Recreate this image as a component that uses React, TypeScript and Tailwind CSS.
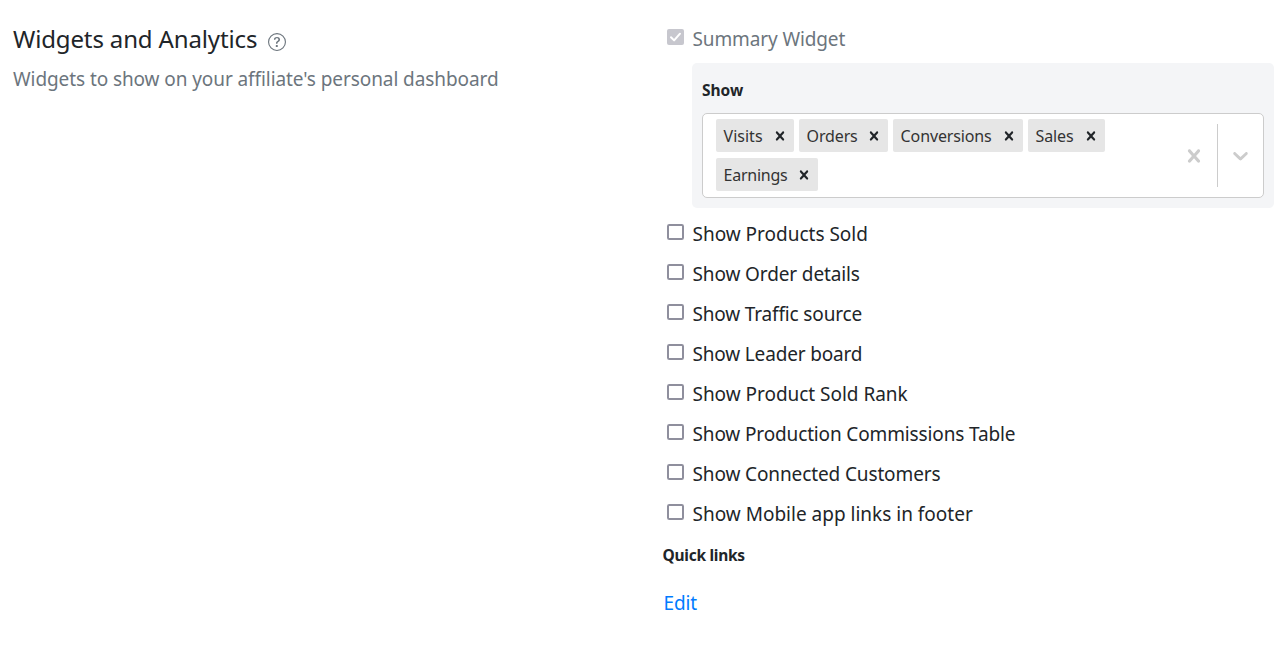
type Item = { label: string; spacing: string };

const options: Item[] = [
  { label: "Show Products Sold", spacing: "tracking-[-0.01px]" },
  { label: "Show Order details", spacing: "tracking-[-0.12px]" },
  { label: "Show Traffic source", spacing: "tracking-[-0.16px]" },
  { label: "Show Leader board", spacing: "tracking-[-0.17px]" },
  { label: "Show Product Sold Rank", spacing: "tracking-[-0.03px]" },
  { label: "Show Production Commissions Table", spacing: "tracking-[-0.14px]" },
  { label: "Show Connected Customers", spacing: "tracking-[-0.12px]" },
  { label: "Show Mobile app links in footer", spacing: "tracking-[0px]" },
];

const tags = [
  { label: "Visits", width: "w-[78px]", spacing: "tracking-[0px]" },
  { label: "Orders", width: "w-[89px]", spacing: "tracking-[-0.15px]" },
  { label: "Conversions", width: "w-[130px]", spacing: "tracking-[-0.13px]" },
  { label: "Sales", width: "w-[77px]", spacing: "tracking-[-0.15px]" },
  { label: "Earnings", width: "w-[102px]", spacing: "tracking-[-0.25px]" },
];

const crossPath =
  "M14.348 14.849c-0.469 0.469-1.229 0.469-1.697 0l-2.651-3.030-2.651 3.029c-0.469 0.469-1.229 0.469-1.697 0-0.469-0.469-0.469-1.229 0-1.697l2.758-3.15-2.759-3.152c-0.469-0.469-0.469-1.228 0-1.697s1.228-0.469 1.697 0l2.652 3.031 2.651-3.031c0.469-0.469 1.228-0.469 1.697 0s0.469 1.229 0 1.697l-2.758 3.152 2.758 3.15c0.469 0.469 0.469 1.229 0 1.698z";
const chevronPath =
  "M4.516 7.548c0.436-0.446 1.043-0.481 1.576 0l3.908 3.747 3.908-3.747c0.533-0.481 1.141-0.446 1.574 0 0.436 0.445 0.408 1.197 0 1.615-0.406 0.418-4.695 4.502-4.695 4.502-0.217 0.223-0.502 0.335-0.787 0.335s-0.57-0.112-0.789-0.335c0 0-4.287-4.084-4.695-4.502s-0.436-1.17 0-1.615z";

function Glyph({ path, className }: { path: string; className: string }) {
  return (
    <svg viewBox="0 0 20 20" fill="currentColor" className={`shrink-0 ${className}`} aria-hidden="true">
      <path d={path} />
    </svg>
  );
}

function Checkbox({ checked = false, className }: { checked?: boolean; className: string }) {
  return (
    <svg viewBox="0 0 17 16" className={`h-4 w-[17px] shrink-0 ${className}`} aria-hidden="true">
      {checked ? (
        <>
          <rect width="17" height="16" rx="2" fill="#c7c7ce" />
          <path d="M4 8.2 7.1 11.4 13 4.7" fill="none" stroke="#fff" strokeWidth="2" strokeLinecap="round" strokeLinejoin="round" />
        </>
      ) : (
        <rect x="1" y="1" width="15" height="14" rx="1.3" fill="#fff" stroke="#8f8f9d" strokeWidth="2" />
      )}
    </svg>
  );
}

function Option({ label, spacing }: Item) {
  return (
    <label className="flex h-10 items-start gap-[8.5px] pl-[5px]">
      <Checkbox className="mt-[10px]" />
      <span className={`whitespace-nowrap leading-10 ${spacing}`}>{label}</span>
    </label>
  );
}

export default function App() {
  return (
    <main className="flex h-[667px] w-[1288px] bg-white font-['Noto_Sans',sans-serif] text-[19px] text-[#212529]">
      <section className="w-[662px] shrink-0 pl-[13px] pt-[19px]">
        <div className="flex h-10 items-center gap-[11px]">
          <h2 className="whitespace-nowrap text-[24px] leading-10 tracking-[-0.14px]">Widgets and Analytics</h2>
          <svg viewBox="0 0 16 16" className="mt-[5px] h-[18px] w-[18px] text-[#6c757d]" fill="currentColor" aria-hidden="true">
            <path d="M8 15A7 7 0 1 1 8 1a7 7 0 0 1 0 14m0 1A8 8 0 1 0 8 0a8 8 0 0 0 0 16" />
            <path d="M5.255 5.786a.237.237 0 0 0 .241.247h.825c.138 0 .248-.113.266-.25.09-.656.54-1.134 1.342-1.134.686 0 1.314.343 1.314 1.168 0 .635-.374.927-.965 1.371-.673.489-1.206 1.06-1.168 1.987l.003.217a.25.25 0 0 0 .25.246h.811a.25.25 0 0 0 .25-.25v-.105c0-.718.273-.927 1.01-1.486.609-.463 1.244-.977 1.244-2.056 0-1.511-1.276-2.241-2.673-2.241-1.267 0-2.655.59-2.75 2.286m1.557 5.763c0 .533.425.927 1.01.927.609 0 1.028-.394 1.028-.927 0-.552-.42-.94-1.029-.94-.584 0-1.009.388-1.009.94" />
          </svg>
        </div>
        <p className="whitespace-nowrap leading-10 tracking-[-0.085px] text-[#6c757d]">
          Widgets to show on your affiliate's personal dashboard
        </p>
      </section>

      <section className="w-[612px] shrink-0 pt-[18px]">
        <div className="flex h-[45px] gap-[8.5px] pl-[5px]">
          <Checkbox checked className="mt-[11px]" />
          <span className="whitespace-nowrap pt-px leading-10 tracking-[-0.12px] text-[#6c757d]">Summary Widget</span>
        </div>
        <div className="ml-[30px] h-[145px] w-[582px] rounded-[5px] bg-[#f4f5f7] px-[10px] pt-[12px]">
          <h3 className="h-[38px] whitespace-nowrap text-[15.5px] font-bold leading-[30px] tracking-[0px]">Show</h3>
          <div className="flex h-[85px] rounded-[5px] border border-[#ccc] bg-white">
            <div className="flex flex-1 flex-wrap content-start gap-x-[5px] gap-y-[6px] pl-[13px] pt-[5px]">
              {tags.map((tag) => (
                <div
                  key={tag.label}
                  className={`flex h-[33px] items-center justify-between rounded-[2px] bg-[#e6e6e6] pl-[7.6px] pr-[5px] ${tag.width}`}
                >
                  <span className={`whitespace-nowrap text-[16px] text-[#333] ${tag.spacing}`}>{tag.label}</span>
                  <Glyph path={crossPath} className="h-[18px] w-[18px] text-[#212529]" />
                </div>
              ))}
            </div>
            <div className="flex w-[91px] shrink-0 text-[#ccc]">
              <div className="flex w-[45px] items-center justify-center pr-px">
                <Glyph path={crossPath} className="h-[26px] w-[26px]" />
              </div>
              <span className="my-[10px] w-px bg-[#ccc]" />
              <div className="flex flex-1 items-center justify-center">
                <Glyph path={chevronPath} className="h-[25px] w-[25px]" />
              </div>
            </div>
          </div>
        </div>
        <div className="pt-[6px]">
          {options.map((option) => (
            <Option key={option.label} {...option} />
          ))}
        </div>
        <h3 className="mt-[6px] whitespace-nowrap pl-[0.5px] text-[15.5px] font-bold leading-[30px] tracking-[-0.27px]">Quick links</h3>
        <a href="#" className="mt-[13px] block w-fit pl-[1.5px] leading-10 tracking-[-0.1px] text-[#007bff]">Edit</a>
      </section>
    </main>
  );
}
